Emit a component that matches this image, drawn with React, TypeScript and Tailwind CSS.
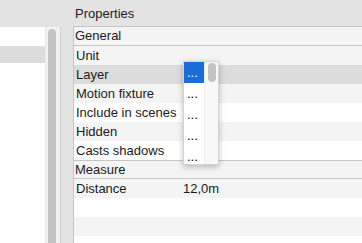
import React from "react";

const rows = [
  { label: "Unit", bg: "bg-[#f4f4f4]" },
  { label: "Layer", bg: "bg-[#dcdcdc]" },
  { label: "Motion fixture", bg: "bg-[#f4f4f4]" },
  { label: "Include in scenes", bg: "bg-white" },
  { label: "Hidden", bg: "bg-[#f4f4f4]" },
  { label: "Casts shadows", bg: "bg-white" },
];

const choices = ["...", "...", "...", "...", "..."];

export default function App() {
  return (
    <div
      className="relative flex h-[243px] w-[362px] overflow-hidden bg-[#e3e3e3] text-[13px] text-[#1a1a1a]"
      style={{ fontFamily: '"Liberation Sans", Arial, sans-serif' }}
    >
      {/* left list + scroller */}
      <div className="flex w-[61px] flex-col">
        <div className="h-[27px] shrink-0" />
        <div className="flex flex-1">
          <div className="w-[45px] bg-white">
            <div className="mt-[19px] h-[17px] bg-[#dcdcdc]" />
          </div>
          <div className="w-[16px] border-l border-r border-l-[#e8e8e8] border-r-[#d2d2d2] bg-[#f2f2f2] pl-[2px] pt-[2px]">
            <div className="h-[260px] w-[8px] rounded-full bg-[#c3c3c3]" />
          </div>
        </div>
      </div>

      <div className="w-[12px]" />

      {/* properties */}
      <div className="flex flex-1 flex-col">
        <div className="flex h-[26px] shrink-0 items-center pl-[2px] pt-[1px] text-[#222]">Properties</div>
        <div className="flex-1 border-l border-t border-[#c6c6c6] bg-white">
          <div className="h-[19px] border-b border-[#c6c6c6] bg-[#f4f4f4] pl-px leading-[18px]">General</div>
          {rows.map((r) => (
            <div key={r.label} className={`h-[19px] pl-[2px] leading-[19px] ${r.bg}`}>
              {r.label}
            </div>
          ))}
          <div className="h-[19px] border-y border-[#c6c6c6] bg-[#f4f4f4] pl-px leading-[17px]">Measure</div>
          <div className="flex h-[19px] bg-[#f4f4f4] leading-[19px]">
            <span className="w-[109px] pl-[2px]">Distance</span>
            <span>12,0m</span>
          </div>
          <div className="h-[19px] bg-white" />
          <div className="h-[19px] bg-[#f4f4f4]" />
          <div className="h-[19px] bg-white" />
        </div>
      </div>

      {/* dropdown list over the Layer value */}
      <div className="absolute left-[183px] top-[61px] flex h-[104px] w-[36px] border border-[#d4d4d4] bg-white shadow-[0_2px_6px_rgba(0,0,0,0.25)]">
        <div className="w-[20px]">
          {choices.map((c, i) => (
            <div
              key={i}
              className={`h-[21px] pl-[3px] leading-[21px] ${i === 0 ? "bg-[#1b6dd9] text-white" : "text-black"}`}
            >
              {c}
            </div>
          ))}
        </div>
        <div className="flex-1 border-l border-[#ececec] bg-[#f8f8f8] pl-[3px] pt-[1px]">
          <div className="h-[19px] w-[8px] rounded-full bg-[#c4c4c4]" />
        </div>
      </div>
    </div>
  );
}
